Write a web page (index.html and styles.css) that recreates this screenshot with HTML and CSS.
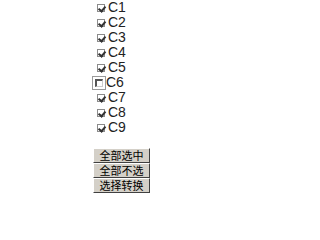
FILE: index.html
```html
<!DOCTYPE html>
<html>
<head>
<meta charset="utf-8">
<link rel="stylesheet" href="styles.css">
</head>
<body>
<div class="page">
  <ul class="list">
    <li class="row"><span class="box checked"></span><span class="label">C1</span></li>
    <li class="row"><span class="box checked"></span><span class="label">C2</span></li>
    <li class="row"><span class="box checked"></span><span class="label">C3</span></li>
    <li class="row"><span class="box checked"></span><span class="label">C4</span></li>
    <li class="row"><span class="box checked"></span><span class="label">C5</span></li>
    <li class="row focus"><span class="ring"><span class="box empty"></span></span><span class="label">C6</span></li>
    <li class="row"><span class="box checked"></span><span class="label">C7</span></li>
    <li class="row"><span class="box checked"></span><span class="label">C8</span></li>
    <li class="row"><span class="box checked"></span><span class="label">C9</span></li>
  </ul>
  <div class="buttons">
    <button class="btn">全部选中</button>
    <button class="btn">全部不选</button>
    <button class="btn">选择转换</button>
  </div>
</div>
</body>
</html>
```
FILE: styles.css
```css
html, body {
  margin: 0;
  padding: 0;
  background: #ffffff;
}
.page {
  padding-left: 93px;
  font-family: "Liberation Sans", "Noto Sans CJK SC", sans-serif;
  color: #000;
}
.list {
  list-style: none;
  margin: 0;
  padding: 0 0 0 4px;
}
.row {
  height: 15px;
  display: flex;
  align-items: center;
  gap: 3px;
}
.box {
  width: 8px;
  height: 8px;
  box-sizing: border-box;
  position: relative;
  display: inline-block;
}
.box.checked {
  border: 1px solid #8c8c8c;
  background: #fff;
}
.box.checked::after {
  content: "";
  position: absolute;
  left: 1px;
  top: 0px;
  width: 3px;
  height: 5px;
  border-right: 2px solid #333;
  border-bottom: 2px solid #333;
  transform: rotate(40deg);
  transform-origin: 60% 60%;
}
.box.empty {
  border-top: 2px solid #555;
  border-left: 2px solid #555;
  border-right: 1px solid #ccc;
  border-bottom: 1px solid #ccc;
  background: #fff;
}
.ring {
  width: 14px;
  height: 14px;
  box-sizing: border-box;
  border: 1px solid #9a9a9a;
  margin-left: -5px;
  display: flex;
  align-items: center;
  justify-content: center;
}
.label {
  font-size: 14px;
  line-height: 15px;
  color: #222;
}
.focus .label {
  margin-left: -3px;
}
.buttons {
  display: flex;
  flex-direction: column;
  align-items: flex-start;
  margin-top: 13px;
}
.btn {
  width: 57px;
  height: 15px;
  padding: 0;
  margin: 0;
  box-sizing: border-box;
  background: #d4d0c8;
  border-top: 1px solid #ffffff;
  border-left: 1px solid #ffffff;
  border-right: 1px solid #404040;
  border-bottom: 1px solid #404040;
  font-family: "Noto Sans CJK SC", sans-serif;
  font-size: 11px;
  line-height: 13px;
  color: #000;
}
```
